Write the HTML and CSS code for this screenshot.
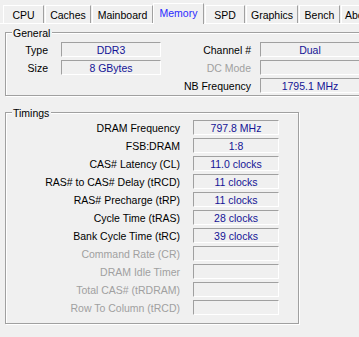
FILE: index.html
```html
<!DOCTYPE html>
<html lang="en">
  <head>
    <meta charset="UTF-8" />
    <meta name="viewport" content="width=device-width, initial-scale=1.0" />
    <title>CPU-Z Memory</title>
    <link rel="stylesheet" href="styles.css">
  </head>
  <body>
    <div class="tabs">
      <div class="tab tab-cpu">CPU</div>
      <div class="tab tab-caches">Caches</div>
      <div class="tab tab-mainboard">Mainboard</div>
      <div class="tab tab-memory selected">Memory</div>
      <div class="tab tab-spd">SPD</div>
      <div class="tab tab-graphics">Graphics</div>
      <div class="tab tab-bench">Bench</div>
      <div class="tab tab-about">About</div>
    </div>

    <div class="panel">
      <div class="group general">
        <div class="group-title">General</div>
        <div class="general-grid">
          <div class="label left">Type</div>
          <div class="field">DDR3</div>
          <div class="label right">Channel #</div>
          <div class="field">Dual</div>

          <div class="label left">Size</div>
          <div class="field">8 GBytes</div>
          <div class="label right disabled">DC Mode</div>
          <div class="field"></div>

          <div class="label left"></div>
          <div class="blank"></div>
          <div class="label right">NB Frequency</div>
          <div class="field">1795.1 MHz</div>
        </div>
      </div>

      <div class="group timings">
        <div class="group-title">Timings</div>
        <div class="timings-grid">
          <div class="label">DRAM Frequency</div>
          <div class="field">797.8 MHz</div>
          <div class="label">FSB:DRAM</div>
          <div class="field">1:8</div>
          <div class="label">CAS# Latency (CL)</div>
          <div class="field">11.0 clocks</div>
          <div class="label">RAS# to CAS# Delay (tRCD)</div>
          <div class="field">11 clocks</div>
          <div class="label">RAS# Precharge (tRP)</div>
          <div class="field">11 clocks</div>
          <div class="label">Cycle Time (tRAS)</div>
          <div class="field">28 clocks</div>
          <div class="label">Bank Cycle Time (tRC)</div>
          <div class="field">39 clocks</div>
          <div class="label disabled">Command Rate (CR)</div>
          <div class="field"></div>
          <div class="label disabled">DRAM Idle Timer</div>
          <div class="field"></div>
          <div class="label disabled">Total CAS# (tRDRAM)</div>
          <div class="field"></div>
          <div class="label disabled">Row To Column (tRCD)</div>
          <div class="field"></div>
        </div>
      </div>
    </div>
  </body>
</html>
```

FILE: styles.css
```css
html,
body {
  margin: 0;
  width: 359px;
  height: 337px;
  overflow: hidden;
}
body {
  background-color: #f0f0f0;
  font-family: "Liberation Sans", Arial, sans-serif;
  font-size: 10.5px;
  color: #000;
}

/* tab strip */
.tabs {
  display: flex;
  align-items: flex-end;
  height: 23px;
  padding-left: 3px;
  white-space: nowrap;
}
.tab {
  box-sizing: border-box;
  height: 18px;
  margin-right: 1px;
  padding-top: 3px;
  line-height: 13px;
  text-align: center;
  border-top: 1px solid #fff;
  border-left: 1px solid #fff;
  border-right: 1px solid #a0a0a0;
  flex: none;
  overflow: hidden;
}
.tab-cpu { width: 41px; }
.tab-caches { width: 46px; }
.tab-mainboard { width: 61px; }
.tab-memory { width: 51px; }
.tab-spd { width: 40px; }
.tab-graphics { width: 52px; }
.tab-bench { width: 41px; }
.tab-about { width: 44px; text-align: left; padding-left: 3px; }
.tab.selected {
  position: relative;
  z-index: 1;
  height: 21px;
  margin-left: -1px;
  margin-bottom: -1px;
  background-color: #f0f0f0;
  color: #2a2aff;
}

/* page under the tabs */
.panel {
  border-top: 1px solid #fff;
  padding-top: 8px;
}
.group {
  box-sizing: border-box;
  margin-left: 5px;
  border: 1px solid #a0a0a0;
  box-shadow: inset 1px 1px 0 #fff, 1px 1px 0 #fff;
}
.group-title {
  width: fit-content;
  margin: -6px 0 0 6px;
  padding: 0 2px 0 1px;
  line-height: 13px;
  background-color: #f0f0f0;
}
.general {
  width: 400px;
  padding-bottom: 2px;
}
.timings {
  width: 294px;
  margin-top: 16px;
  padding-bottom: 8px;
}

.general-grid {
  display: grid;
  grid-template-columns: 55px 100px 99px 100px;
  grid-auto-rows: 15px;
  row-gap: 3px;
  margin-top: 2px;
}
.timings-grid {
  display: grid;
  grid-template-columns: 187px 86px;
  grid-auto-rows: 15px;
  row-gap: 3px;
}

.label {
  box-sizing: border-box;
  padding-top: 1px;
  padding-right: 13px;
  line-height: 15px;
  text-align: right;
  white-space: nowrap;
}
.label.right {
  padding-right: 9px;
}
.label.disabled {
  color: #a0a0a0;
}

.field {
  box-sizing: border-box;
  padding-top: 1px;
  line-height: 13px;
  text-align: center;
  color: #141496;
  border-top: 1px solid #a0a0a0;
  border-left: 1px solid #a0a0a0;
  border-bottom: 1px solid #fff;
  border-right: 1px solid #fff;
  white-space: nowrap;
}
```
